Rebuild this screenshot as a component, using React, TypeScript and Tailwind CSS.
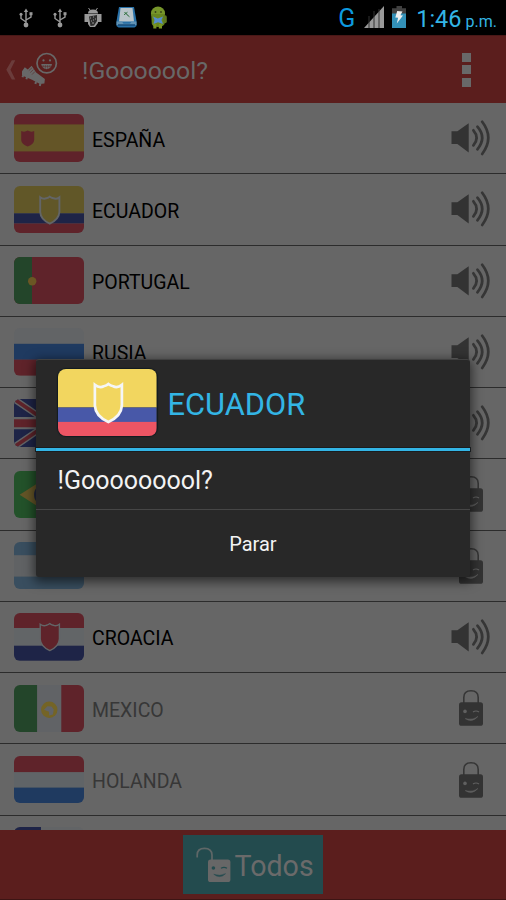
import React from "react";

type FlagName =
  | "es" | "ec" | "pt" | "ru" | "uk" | "br" | "ar" | "hr" | "mx" | "nl" | "cl";

const SHIELD =
  "M26.2 11.2 Q29.5 13.8 32.5 12.2 Q34.5 11.8 35.8 10.6 Q37.2 11.8 39.2 12.2 Q42.2 13.8 45.4 11.2 V26 Q45 33.5 35.8 37.6 Q26.6 33.5 26.2 26 Z";

function EcuadorArt({ y, b, r, s }: { y: string; b: string; r: string; s: string }) {
  return (
    <>
      <rect width="70" height="27.3" fill={y} />
      <rect y="27.3" width="70" height="10.3" fill={b} />
      <rect y="37.5" width="70" height="10" fill={r} />
      <path d={SHIELD} fill={y} stroke={s} strokeWidth="1.9" />
    </>
  );
}

function FlagArt({ name }: { name: FlagName }) {
  switch (name) {
    case "es":
      return (
        <>
          <rect width="70" height="48" fill="#5f232a" />
          <rect y="10.4" width="70" height="27" fill="#645527" />
          <path d="M7.2 17 Q10.5 18.5 13.7 16.6 Q17 18.5 20.2 17 V26 Q20 30 13.7 32.6 Q7.4 30 7.2 26Z" fill="#5f232a" />
        </>
      );
    case "ec":
      return <EcuadorArt y="#615728" b="#1e2447" r="#5f232a" s="#636567" />;
    case "pt":
      return (
        <>
          <rect width="70" height="48" fill="#5f232a" />
          <rect width="18" height="48" fill="#23452a" />
          <circle cx="18.2" cy="24.2" r="4.2" fill="#6b5624" />
        </>
      );
    case "ru":
      return (
        <>
          <rect width="70" height="16" fill="#626466" />
          <rect y="15.8" width="70" height="16" fill="#1f3a60" />
          <rect y="31.6" width="70" height="16" fill="#5f232a" />
        </>
      );
    case "uk":
      return (
        <>
          <rect width="70" height="48" fill="#1e2447" />
          <path d="M0 0 70 48M70 0 0 48" stroke="#626466" strokeWidth="6.4" />
          <path d="M0 0 70 48M70 0 0 48" stroke="#5f232a" strokeWidth="3.6" />
          <path d="M0 24.2H70M35 0V48" stroke="#626466" strokeWidth="12.2" />
          <path d="M0 24.2H70M35 0V48" stroke="#5f232a" strokeWidth="8" />
        </>
      );
    case "br":
      return (
        <>
          <rect width="70" height="48" fill="#23522a" />
          <path d="M5.6 23.8 35 5 64.4 23.8 35 42.6Z" fill="#645527" />
          <circle cx="31" cy="23.8" r="11" fill="#22293f" />
        </>
      );
    case "ar":
      return (
        <>
          <rect width="70" height="48" fill="#394e5f" />
          <rect y="13.2" width="70" height="21.4" fill="#606264" />
        </>
      );
    case "hr":
      return (
        <>
          <rect width="70" height="15.2" fill="#5f232a" />
          <rect y="15" width="70" height="18" fill="#626567" />
          <rect y="32.7" width="70" height="15" fill="#1e2447" />
          <path d={SHIELD} fill="#5f232a" stroke="#636567" strokeWidth="1.4" />
        </>
      );
    case "mx":
      return (
        <>
          <rect width="23.4" height="48" fill="#23452a" />
          <rect x="23.2" width="24.4" height="48" fill="#616366" />
          <rect x="47.3" width="23" height="48" fill="#5f232a" />
          <circle cx="35.3" cy="24.8" r="8.2" fill="#746426" />
          <path d="M30 24.8 33.4 21.2 37.5 21.6 39.8 24.6 38.9 29.6 35.2 30.4 35 26.8Z" fill="#616366" />
        </>
      );
    case "nl":
      return (
        <>
          <rect width="70" height="16.4" fill="#5f232a" />
          <rect y="16.2" width="70" height="16" fill="#606467" />
          <rect y="31.6" width="70" height="16" fill="#1f3a60" />
        </>
      );
    default:
      return (
        <>
          <rect width="70" height="48" fill="#626466" />
          <rect width="27" height="24" fill="#1e2447" />
        </>
      );
  }
}

function Flag({ name }: { name: FlagName }) {
  return (
    <div className="h-[47.5px] w-[70px] shrink-0 overflow-hidden rounded-[6px]">
      <svg viewBox="0 0 70 47.5" className="block h-full w-full">
        <FlagArt name={name} />
      </svg>
    </div>
  );
}

function Speaker() {
  return (
    <svg viewBox="0 0 39 36" className="block h-9 w-[39px]">
      <path d="M0.5 11.2H6.4L17.7 3.3V32.5L6.4 24H0.5Z" fill="#333" />
      <g fill="none" stroke="#363636" strokeWidth="2.7" strokeLinecap="round">
        <path d="M22.4 10.3 Q28.8 17.8 22.4 25.4" />
        <path d="M26.4 6.7 Q36 17.8 26.4 29.3" />
        <path d="M31.2 1.8 Q43.4 17.8 31.2 34" />
      </g>
    </svg>
  );
}

function Lock() {
  return (
    <svg viewBox="0 0 24 36" className="mr-[7px] block h-9 w-6">
      <path d="M4.8 14V7.5Q4.8.8 12 .8T19.2 7.5V14" fill="none" stroke="#363636" strokeWidth="1.6" />
      <rect y="12.2" width="24" height="23.6" rx="2.6" fill="#333" />
      <circle cx="6" cy="21.4" r="1.8" fill="#606060" />
      <path d="M14 22Q17 20 20 22" fill="none" stroke="#606060" strokeWidth="1.2" />
      <path d="M6.2 28.6Q13 33.2 19 26.4Q14 30.4 6.2 28.6Z" fill="#606060" stroke="#606060" strokeWidth=".5" />
    </svg>
  );
}

interface Team {
  flag: FlagName;
  name: string;
  locked?: boolean;
}

const TEAMS: Team[] = [
  { flag: "es", name: "ESPAÑA" },
  { flag: "ec", name: "ECUADOR" },
  { flag: "pt", name: "PORTUGAL" },
  { flag: "ru", name: "RUSIA" },
  { flag: "uk", name: "" },
  { flag: "br", name: "", locked: true },
  { flag: "ar", name: "", locked: true },
  { flag: "hr", name: "CROACIA" },
  { flag: "mx", name: "MEXICO", locked: true },
  { flag: "nl", name: "HOLANDA", locked: true },
  { flag: "cl", name: "", locked: true },
];

function TeamRow({ team }: { team: Team }) {
  return (
    <li className="flex h-[71.27px] shrink-0 items-center border-b border-[#2c2c2c] pl-[14px] pr-4">
      <Flag name={team.flag} />
      <span
        className={
          team.locked
            ? "ml-2 flex-1 pt-[4px] text-[19.5px] text-[#373737]"
            : "ml-2 flex-1 pt-[4px] text-[19.5px] text-black"
        }
      >
        {team.name}
      </span>
      {team.locked ? <Lock /> : <Speaker />}
    </li>
  );
}

function Usb() {
  return (
    <svg viewBox="0 0 14 20" className="h-5 w-[14px]" fill="none" stroke="#999" strokeWidth="1.4">
      <path d="M7 3V17M7 14 2 10.5V7M7 12 12 9V6" />
      <path d="M4.8 4 7 .6 9.2 4Z" fill="#999" stroke="none" />
      <circle cx="7" cy="17" r="2.4" fill="#999" stroke="none" />
      <circle cx="2" cy="6.2" r="1.5" fill="#999" stroke="none" />
      <rect x="10.5" y="4.2" width="3" height="3" fill="#999" stroke="none" />
    </svg>
  );
}

function StatusBar() {
  return (
    <div className="flex h-[35px] shrink-0 bg-black">
      <div className="flex pl-[19px] pt-2">
        <Usb />
        <div className="w-5" />
        <Usb />
        <svg viewBox="0 0 18 20" className="ml-[17px] h-5 w-[18px]">
          <path d="M4 5.5Q4 1.5 9 1.5T14 5.5Z" fill="#999" />
          <path d="M4.5 0 6 2M13.5 0 12 2" stroke="#999" />
          <path d="M.5 6H4V14H.5ZM14 6H17.5V14H14ZM4 6H14V15L11 19H6L4 16Z" fill="#999" />
          <path d="M5 8.5 13 7V13L10 17.5 6.5 18Z" fill="#2c2c2c" />
          <path d="M6 10H7M9 9H10M11 11H12M7 13H8M9 12H10M8 15H10" stroke="#999" />
        </svg>
        <svg viewBox="0 0 21 21" className="ml-[14px] -mt-[1px] h-[21px] w-[21px]">
          <path d="M3 0H18L20.5 14V19L18.5 20.5H2.5L.5 19V14Z" fill="#2870a7" />
          <path d="M4.5 1H16.5L18 14.5H3Z" fill="#b9c4c9" />
          <path d="M.5 14.5H6L7.5 16.8H14L15.5 14.5H20.5V18H.5Z" fill="#6193b5" />
          <path d="M2 18H19" stroke="#164b7a" strokeWidth="1.5" />
          <path d="M8.5 5 10.5 7.2 13.5 9.8M8 7.8 11.5 5.2" stroke="#317541" strokeWidth="1" />
        </svg>
        <svg viewBox="0 0 18 24" className="ml-[13px] -mt-[2px] h-6 w-[18px]">
          <ellipse cx="8" cy="7.2" rx="7" ry="6.6" fill="#76952a" />
          <path d="M1.2 8H14.6V18Q13 21 8 21T1.8 18Z" fill="#68861f" />
          <rect x="13.2" y="9.2" width="3.6" height="8" rx="1.7" fill="#5e7820" />
          <path d="M3.3 18H6.4V22.5H3.3ZM8.8 18H12V22.5H8.8Z" fill="#789523" />
          <path d="M3 10.5 7.8 12.6 13 10.5 11.5 14 13 18 8 16.2 3.5 18 4.5 14Z" fill="#558dce" />
          <circle cx="5.5" cy="6" r=".9" fill="#354018" />
          <circle cx="11" cy="6" r=".9" fill="#354018" />
        </svg>
      </div>
      <div className="flex flex-1 justify-end pr-[9px]">
        <span className="pt-[2px] text-[25px] leading-[34px] text-[#0d99df]">G</span>
        <svg viewBox="0 0 20 22" className="ml-[9px] mt-[6px] h-[22px] w-5">
          <path d="M20 0V22H0Z" fill="#999" />
          <path d="M5 10V22M10 5V22M15 3V22" stroke="#333" strokeWidth="1" />
        </svg>
        <svg viewBox="0 0 14 22" className="ml-2 mt-[6px] h-[22px] w-[14px]">
          <path d="M4.5 0H10V2.3H14V8H0V2.3H4.5Z" fill="#414141" />
          <rect y="7.5" width="14" height="14.5" fill="#3391b8" />
          <path d="M5.2 5 10.5 5.5 8.4 9.3 11 9.5 4.8 17.5 6.1 11.8 3.3 11.5Z" fill="#eee" />
        </svg>
        <span className="ml-[10px] pt-[2px] text-[23.5px] leading-[35px] text-[#33b5e5]">1:46</span>
        <span className="ml-[4px] pt-[4px] text-[16px] leading-[35px] text-[#33b5e5]">p.m.</span>
      </div>
    </div>
  );
}

function AppBar() {
  return (
    <div className="flex h-[68px] shrink-0 items-center border-t border-[#491817] bg-[#5b1e1d]">
      <svg viewBox="0 0 60 36" className="h-9 w-[60px] shrink-0">
        <path d="M11.8 8.3H15.3L10.5 17.8 15.3 27.5H11.8L6.3 17.8Z" fill="#6b3c3b" />
        <circle cx="46.7" cy="11.2" r="9.7" fill="none" stroke="#686868" strokeWidth="1.7" />
        <circle cx="43.5" cy="8.4" r="1.1" fill="#686868" />
        <circle cx="50" cy="8.4" r="1.1" fill="#686868" />
        <path d="M41.2 12.1H52Q51 17.2 46.6 17.2T41.2 12.1Z" fill="#686868" />
        <path d="M43.2 13V15.5M45.4 13V16.8M47.6 13V16.8M49.8 13V15.5M42 14.4H51" stroke="#5b1e1d" strokeWidth=".4" />
        <path d="M22 19.2 24.8 15.2 27.8 17.6 31.6 13.8 36.2 20.4 44.9 27 44.4 31.6 40 32 32 27.8 22 23.6Z" fill="#686868" />
        <path d="M28.8 18.6 32 15.8M30.3 20.6 33.5 17.5M32 22.6 35 19.5" stroke="#5b1e1d" strokeWidth=".5" />
        <path d="M23 23.5 22.6 25.2M27 25 26.4 27.2M36 29.5 35.4 32M40.4 31.5 39.8 34" stroke="#686868" strokeWidth="2" />
      </svg>
      <h1 className="ml-[22px] flex-1 pt-[2px] text-[24.8px] text-[#686868]">!Gooooool?</h1>
      <div className="mr-[35px] flex flex-col gap-[3.5px]">
        <i className="block h-[9px] w-[9px] bg-[#686868]" />
        <i className="block h-[9px] w-[9px] bg-[#686868]" />
        <i className="block h-[9px] w-[9px] bg-[#686868]" />
      </div>
    </div>
  );
}

function BottomBar() {
  return (
    <div className="flex h-[70px] shrink-0 justify-center border-b border-[#3d1514] bg-[#5b1e1d] pt-[5px]">
      <button className="flex h-[59px] w-[140px] items-center bg-[#234b4e] pl-[12.5px]">
        <svg viewBox="0 0 35 36" className="h-9 w-[35px] shrink-0">
          <path d="M1.2 10.5V8Q1.2 1.3 8.5 1.3T16 8V14" fill="none" stroke="#5f6767" strokeWidth="1.7" />
          <rect x="12" y="12.6" width="22.4" height="22.5" rx="2.6" fill="#676767" />
          <circle cx="17.4" cy="21" r="1.8" fill="#234b4e" />
          <path d="M25 21.3Q28 19.6 31 21.3" fill="none" stroke="#234b4e" strokeWidth="1.2" />
          <path d="M17.8 27.3Q24 32.2 29.5 26.7Q24 29.6 17.8 27.3Z" fill="#234b4e" stroke="#234b4e" strokeWidth=".5" />
        </svg>
        <span className="ml-[4px] pt-[4px] text-[28.6px] text-[#6a6a6a]">Todos</span>
      </button>
    </div>
  );
}

function Dialog() {
  return (
    <div className="absolute left-[35.5px] top-[359px] flex h-[217.5px] w-[434.8px] flex-col rounded-[3px] border-t border-[#404040] bg-[#282828] shadow-[0_3px_11px_2px_rgba(0,0,0,0.55)]">
      <div className="flex h-[88px] shrink-0 items-start pl-[22.5px] pt-[9px]">
        <div className="h-[67px] w-[98.5px] shrink-0 overflow-hidden rounded-[8px] shadow-[0_0_1px_1px_#111b20]">
          <svg viewBox="0 0 70 47.5" preserveAspectRatio="none" className="block h-full w-full">
            <EcuadorArt y="#f2d65f" b="#4858a8" r="#ed5564" s="#f5f6f7" />
          </svg>
        </div>
        <h2 className="ml-[11px] pt-[13px] text-[30.8px] leading-[46px] text-[#33b5e5]">ECUADOR</h2>
      </div>
      <div className="h-[3px] shrink-0 bg-[#33b5e5] shadow-[0_0_0_1px_#191d20]" />
      <p className="h-[58px] shrink-0 pl-[22px] pt-px text-[25px] leading-[58px] text-[#f3f3f3]">!Gooooooool?</p>
      <button className="flex-1 border-t border-[#464646] pt-[1px] text-[20px] text-[#f3f3f3]">Parar</button>
    </div>
  );
}

export default function App() {
  return (
    <div className="relative flex h-[900px] w-[506px] flex-col overflow-hidden bg-[#666] font-['Roboto',sans-serif]">
      <StatusBar />
      <AppBar />
      <ul className="flex min-h-0 flex-1 flex-col overflow-hidden">
        {TEAMS.map((team) => (
          <TeamRow key={team.flag} team={team} />
        ))}
      </ul>
      <BottomBar />
      <Dialog />
    </div>
  );
}
